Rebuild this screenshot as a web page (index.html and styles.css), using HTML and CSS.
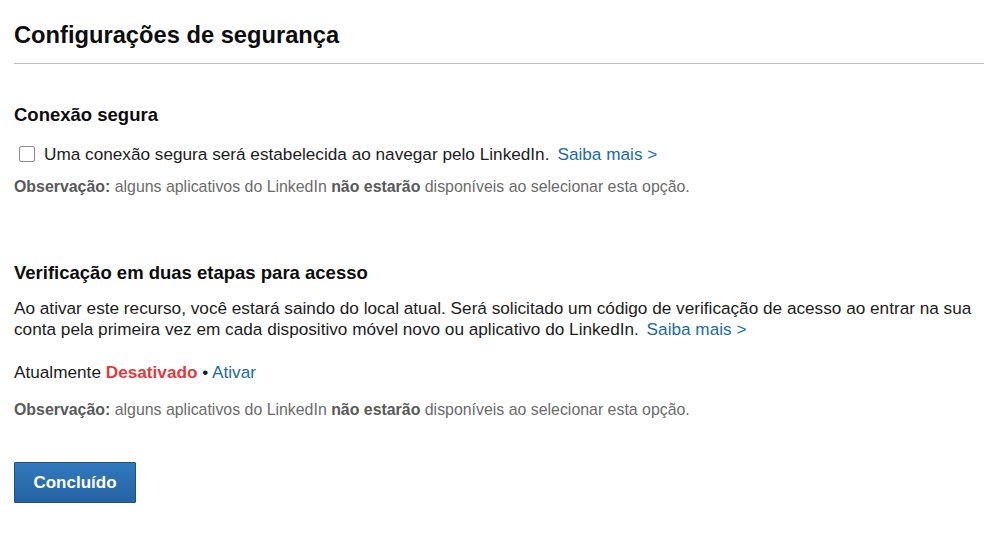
FILE: index.html
```html
<!DOCTYPE html>
<html lang="pt">
<head>
<meta charset="utf-8">
<title>Configurações de segurança</title>
<link rel="stylesheet" href="styles.css">
</head>
<body>
<div class="page">
  <h1 class="title">Configurações de segurança</h1>

  <section class="block">
    <h2 class="heading">Conexão segura</h2>
    <label class="check-row">
      <span class="checkbox"></span>
      <span>Uma conexão segura será estabelecida ao navegar pelo LinkedIn.</span>
      <a class="link more" href="#">Saiba mais &gt;</a>
    </label>
    <p class="note"><b>Observação:</b> alguns aplicativos do LinkedIn <b>não estarão</b> disponíveis ao selecionar esta opção.</p>
  </section>

  <section class="block block-two">
    <h2 class="heading">Verificação em duas etapas para acesso</h2>
    <p class="para">Ao ativar este recurso, você estará saindo do local atual. Será solicitado um código de verificação de acesso ao entrar na sua<br>conta pela primeira vez em cada dispositivo móvel novo ou aplicativo do LinkedIn. <a class="link more" href="#">Saiba mais &gt;</a></p>
    <p class="status">Atualmente <span class="off">Desativado</span> • <a class="link" href="#">Ativar</a></p>
    <p class="note note-two"><b>Observação:</b> alguns aplicativos do LinkedIn <b>não estarão</b> disponíveis ao selecionar esta opção.</p>
  </section>

  <button class="done" type="button">Concluído</button>
</div>
</body>
</html>
```

FILE: styles.css
```css
html, body {
  margin: 0;
  padding: 0;
  background: #ffffff;
}

body {
  font-family: "Liberation Sans", Arial, sans-serif;
  color: #1c1c1c;
}

.page {
  padding-left: 14px;
  display: flex;
  flex-direction: column;
  align-items: flex-start;
}

.title {
  align-self: stretch;
  margin: 21px 0 0;
  padding-bottom: 14px;
  border-bottom: 1px solid #bdbdbd;
  font-size: 23.7px;
  line-height: 28px;
  font-weight: bold;
  color: #0d0d0d;
}

.block {
  display: flex;
  flex-direction: column;
  align-items: flex-start;
}

.heading {
  margin: 40px 0 0;
  font-size: 18.5px;
  line-height: 22px;
  font-weight: bold;
  color: #0d0d0d;
}

.check-row {
  margin-top: 17px;
  display: flex;
  align-items: center;
  font-size: 17.2px;
  line-height: 22px;
}

.checkbox {
  width: 14px;
  height: 14px;
  border: 1px solid #8a8a8a;
  border-radius: 2px;
  background: #fff;
  margin: 0 9px 0 5px;
  flex: none;
}

.link {
  color: #1a6aa8;
  text-decoration: none;
}

.more {
  margin-left: 3px;
}

.check-row .more {
  margin-left: 8px;
}

.note {
  margin: 12px 0 0;
  font-size: 15.9px;
  line-height: 20px;
  color: #6b6b6b;
}

.note b {
  color: #595959;
}

.block-two .heading {
  margin-top: 65px;
}

.para {
  margin: 14px 0 0;
  font-size: 17.2px;
  line-height: 21px;
}

.status {
  margin: 22px 0 0;
  font-size: 17.2px;
  line-height: 21px;
}

.off {
  color: #e03a3e;
  font-weight: bold;
}

.note-two {
  margin-top: 17px;
}

.done {
  margin-top: 42px;
  width: 122px;
  height: 41px;
  border: 1px solid #1b4f86;
  border-radius: 1px;
  background: linear-gradient(#3179bd, #2563a3);
  color: #fff;
  font-family: "Liberation Sans", Arial, sans-serif;
  font-size: 17px;
  font-weight: bold;
  padding: 0;
  cursor: pointer;
}
```
